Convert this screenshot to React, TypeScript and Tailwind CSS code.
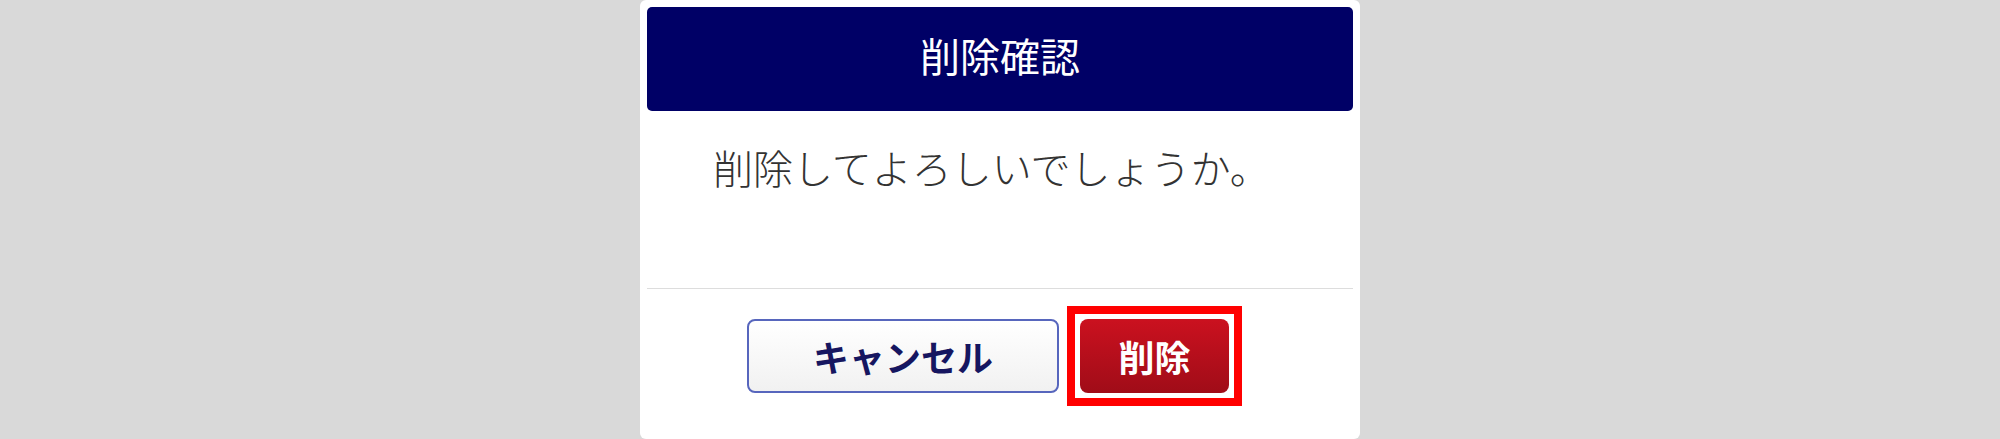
const font = { fontFamily: '"Noto Sans CJK JP", "Noto Sans", sans-serif' };

export default function App() {
  return (
    <div className="w-full h-[439px] bg-[#d9d9d9] flex justify-center overflow-hidden" style={font}>
      <div className="w-[720px] h-[439px] bg-white rounded-[6px] px-[7px] pt-[7px] flex flex-col">
        <div className="h-[104px] bg-[#000066] rounded-[5px] flex items-center justify-center pb-[8px]">
          <h1 className="text-white text-[40px] leading-none">削除確認</h1>
        </div>
        <div className="h-[177px] pl-[66px] pt-[36px]">
          <p className="text-[#333333] text-[40px] font-light leading-none">削除してよろしいでしょうか。</p>
        </div>
        <div className="border-t border-[#dddddd]" />
        <div className="flex items-start pl-[100px] pt-[17px] gap-[8px]">
          <button className="mt-[13px] w-[312px] h-[74px] rounded-[8px] border-2 border-[#5766bd] bg-gradient-to-b from-white to-[#f1f1f1] text-[#161660] text-[36px] font-bold leading-none">
            キャンセル
          </button>
          <div className="border-[8px] border-[#ff0000] p-[5px]">
            <button className="w-[149px] h-[74px] rounded-[8px] bg-gradient-to-b from-[#cb111f] to-[#a00c18] text-white text-[36px] font-bold leading-none">
              削除
            </button>
          </div>
        </div>
      </div>
    </div>
  );
}
